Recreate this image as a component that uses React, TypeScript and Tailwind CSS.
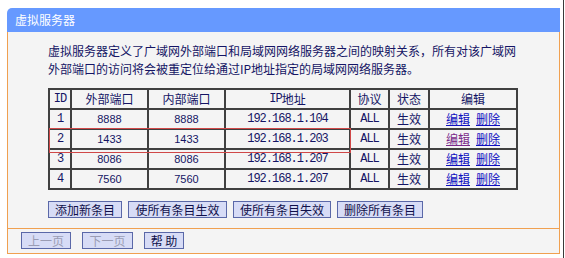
import React from "react";

const ROWS = [
  { id: "1", ext: "8888", int: "8888", ip: "192.168.1.104", visited: false },
  { id: "2", ext: "1433", int: "1433", ip: "192.168.1.203", visited: true },
  { id: "3", ext: "8086", int: "8086", ip: "192.168.1.207", visited: false },
  { id: "4", ext: "7560", int: "7560", ip: "192.168.1.207", visited: false },
];

const cjk = "font-['Noto_Sans_CJK_SC',sans-serif]";
const mono = "font-['Liberation_Mono','Noto_Sans_CJK_SC',monospace] text-[12px] tracking-[-1px]";
const cell = "bg-[#f4f4f4] h-[18px] flex items-center justify-center leading-none";

function Btn({ label, disabled = false, w }: { label: string; disabled?: boolean; w: string }) {
  return (
    <button
      type="button"
      className={`${w} h-[17px] border border-[#5a68a8] bg-[#d7dcf6] text-[12px] leading-none ${cjk} ${
        disabled ? "text-[#9a9cb4]" : "text-[#10104a]"
      }`}
    >
      {label}
    </button>
  );
}

export default function App() {
  return (
    <div className="relative w-[565px] h-[258px] bg-white overflow-hidden">
      <div className="ml-[7px] pt-[8px] w-[553px]">
        {/* Title bar */}
        <div className={`h-[24px] bg-[#6699ff] rounded-tl-[5px] pl-[8px] text-white text-[12px] leading-[24px] ${cjk}`}>
          虚拟服务器
        </div>

        {/* Body */}
        <div className="border-x border-b border-[#f0a050] bg-[#f4f4f4] text-[#141464]">
          <div className="pl-[40px] pt-[10px] pb-[10px]">
            <p className={`w-[470px] text-[12px] leading-[18px] ${cjk}`}>
              虚拟服务器定义了广域网外部端口和局域网网络服务器之间的映射关系，所有对该广域网外部端口的访问将会被重定位给通过IP地址指定的局域网网络服务器。
            </p>

            <div className="relative mt-[10px] w-[470px]">
              <div className="grid grid-cols-[20px_75px_75px_123px_37px_38px_86px] gap-[2px] p-[2px] bg-[#404040]">
                <div className={`${cell} ${mono}`}>ID</div>
                <div className={`${cell} text-[12px] ${cjk}`}>外部端口</div>
                <div className={`${cell} text-[12px] ${cjk}`}>内部端口</div>
                <div className={`${cell} text-[12px] ${cjk}`}>
                  <span className={mono}>IP</span>地址
                </div>
                <div className={`${cell} text-[12px] ${cjk}`}>协议</div>
                <div className={`${cell} text-[12px] ${cjk}`}>状态</div>
                <div className={`${cell} text-[12px] ${cjk}`}>编辑</div>

                {ROWS.map((r) => (
                  <React.Fragment key={r.id}>
                    <div className={`${cell} ${mono}`}>{r.id}</div>
                    <div className={`${cell} text-[11px] font-['Liberation_Sans',sans-serif]`}>{r.ext}</div>
                    <div className={`${cell} text-[11px] font-['Liberation_Sans',sans-serif]`}>{r.int}</div>
                    <div className={`${cell} ${mono}`}>{r.ip}</div>
                    <div className={`${cell} ${mono}`}>ALL</div>
                    <div className={`${cell} text-[12px] ${cjk}`}>生效</div>
                    <div className={`${cell} gap-[6px] text-[12px] ${cjk}`}>
                      <a className={`underline ${r.visited ? "text-[#7a2a8a]" : "text-[#1010c0]"}`}>编辑</a>
                      <a className="underline text-[#1010c0]">删除</a>
                    </div>
                  </React.Fragment>
                ))}
              </div>
              {/* annotation box */}
              <div className="absolute left-[1px] top-[40px] w-[302px] h-[25px] border border-[#d04848]" />
            </div>

            <div className="mt-[11px] flex gap-[6px]">
              <Btn label="添加新条目" w="w-[74px]" />
              <Btn label="使所有条目生效" w="w-[99px]" />
              <Btn label="使所有条目失效" w="w-[98px]" />
              <Btn label="删除所有条目" w="w-[86px]" />
            </div>
          </div>

          <div className="border-t border-[#f0a050] pl-[13px] pt-[3px] pb-[4px] flex gap-[11px]">
            <Btn label="上一页" disabled w="w-[50px]" />
            <Btn label="下一页" disabled w="w-[51px]" />
            <Btn label="帮 助" w="w-[40px]" />
          </div>
        </div>
      </div>
      <div className="absolute right-[1px] top-0 h-full w-px bg-[#3a3a3a]" />
    </div>
  );
}
